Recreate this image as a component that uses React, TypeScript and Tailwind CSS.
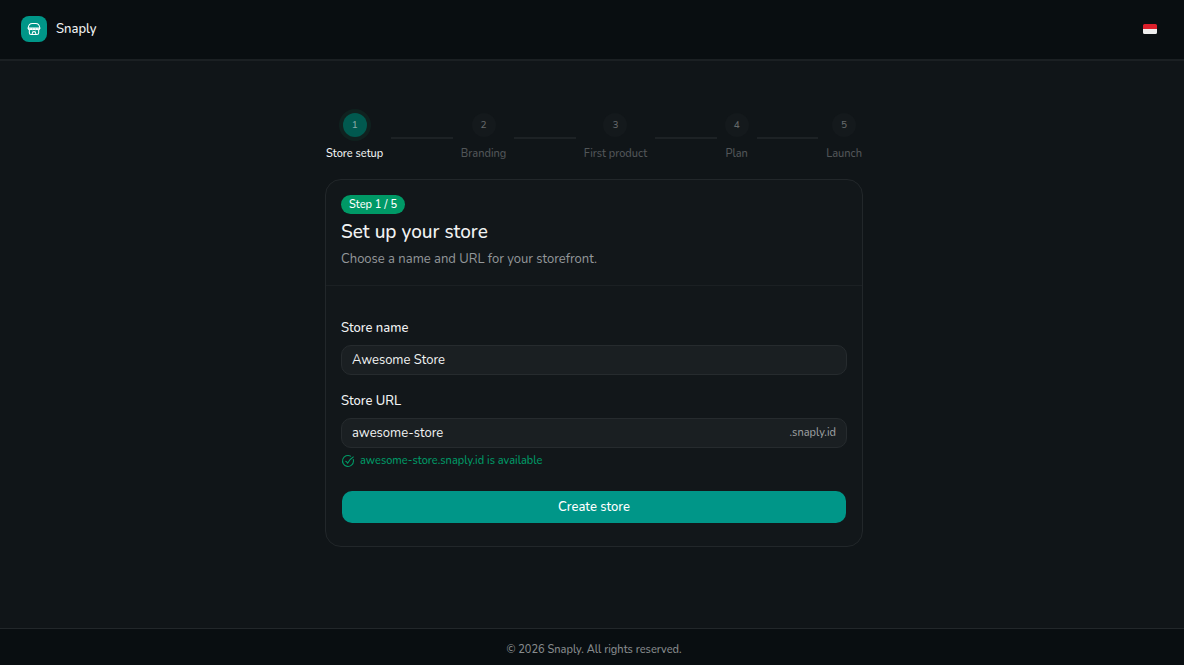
import { Fragment, useState } from "react";

const steps = ["Store setup", "Branding", "First product", "Plan", "Launch"];

function StoreIcon() {
  return (
    <svg viewBox="0 0 24 24" className="size-3.5" fill="none" stroke="currentColor" strokeWidth="1.8" strokeLinecap="round" strokeLinejoin="round" aria-hidden="true">
      <path d="M2 10.500C2.500 6 5.500 2.500 9 2.500h6c3.500 0 6.500 3.500 7 8" />
      <path d="M2 10.500h20c0 1.800-1.100 2.800-2.700 2.800s-2.400-1-2.400-1-.8 1-2.450 1-2.450-1-2.450-1-.8 1-2.450 1-2.450-1-2.450-1-.8 1-2.400 1c-1.600 0-2.700-1-2.700-2.800z" />
      <path d="M4 13.500v5c0 2 .9 3 3 3h10c2.100 0 3-1 3-3v-5" />
      <path d="M9 21.500v-2c0-1.700 1.300-3 3-3s3 1.300 3 3v2" />
    </svg>
  );
}

function CheckIcon() {
  return (
    <svg viewBox="0 0 24 24" className="size-3.5 shrink-0" fill="none" stroke="currentColor" strokeWidth="1.8" strokeLinecap="round" strokeLinejoin="round" aria-hidden="true">
      <path d="M21 9.500c.3.800.4 1.700.4 2.500A9.400 9.400 0 1 1 16.500 3.700" />
      <path d="M8 12.500c0 0 1.500 0 3.300 3.300 0 0 4.500-8 9.700-10.800" />
    </svg>
  );
}

function Flag() {
  return (
    <svg viewBox="0 0 14 10" className="h-2.5 w-3.5" aria-hidden="true">
      <path d="M1.500 0h11a1.500 1.500 0 0 1 1.500 1.500V5H0V1.500A1.500 1.500 0 0 1 1.500 0z" fill="#dc1f2b" />
      <path d="M0 5h14v3.500a1.500 1.500 0 0 1-1.500 1.500h-11A1.500 1.500 0 0 1 0 8.500z" fill="#eeeeee" />
    </svg>
  );
}

function Stepper() {
  return (
    <ol className="flex items-center gap-2 px-px">
      {steps.map((label, i) => (
        <Fragment key={label}>
          {i > 0 && <li aria-hidden="true" className="h-0.5 flex-1 bg-[#1d2225]" />}
          <li className="flex flex-col items-center gap-[9px]">
            <span
              className={
                i === 0
                  ? "flex size-6 items-center justify-center rounded-full bg-[#01594f] text-[10px] leading-4 font-medium text-[#87aaa6] ring-4 ring-[#10211f]"
                  : "flex size-6 items-center justify-center rounded-full bg-[#14191c] text-[10px] leading-4 font-medium text-[#64686a]"
              }
            >
              {i + 1}
            </span>
            <span className={i === 0 ? "text-[11px] leading-4 font-medium whitespace-nowrap text-[#f1f3f3]" : "text-[11px] leading-4 font-medium whitespace-nowrap text-[#525658]"}>
              {label}
            </span>
          </li>
        </Fragment>
      ))}
    </ol>
  );
}

export default function App() {
  const [name, setName] = useState("Awesome Store");
  const [slug, setSlug] = useState("awesome-store");

  return (
    <div className="flex min-h-screen flex-col bg-[#101518] font-[Nunito,'Noto_Sans',sans-serif] text-[13px] leading-5 text-[#f1f3f3]">
      <header className="flex items-center justify-between border-b-2 border-[#1b2023] bg-[#090e11] px-[21px] pt-4 pb-[17px]">
        <a href="#" className="flex items-center gap-[9px] font-medium">
          <span className="flex size-[26px] items-center justify-center rounded-lg bg-[#009688] text-white">
            <StoreIcon />
          </span>
          Snaply
        </a>
        <button type="button" aria-label="Language" className="flex size-[26px] items-center justify-center">
          <Flag />
        </button>
      </header>

      <main className="flex flex-1 flex-col pt-[52px] pb-20 pl-1">
        <div className="mx-auto flex w-full max-w-[538px] flex-col gap-[17px]">
          <Stepper />

          <section className="rounded-2xl border border-[#22272a] bg-[#12171a]">
            <div className="flex flex-col items-start border-b border-[#1b2023] px-[15px] pt-[15px] pb-4">
              <span className="rounded-full bg-[#009966] px-2 text-[11px] leading-[19px] font-medium text-white">Step 1 / 5</span>
              <h1 className="mt-1 text-[19px] leading-7 font-medium">Set up your store</h1>
              <p className="mt-1 leading-[19px] text-[#94989a]">Choose a name and URL for your storefront.</p>
            </div>

            <form className="flex flex-col px-[15px] pt-8 pb-[23px]" onSubmit={(e) => e.preventDefault()}>
              <label htmlFor="store-name" className="font-medium">Store name</label>
              <input
                id="store-name"
                value={name}
                onChange={(e) => setName(e.target.value)}
                className="mt-[7px] h-[30px] rounded-[10px] border border-[#262b2e] bg-[#1a1f22] px-2.5 outline-none"
              />

              <label htmlFor="store-url" className="mt-4 font-medium">Store URL</label>
              <div className="mt-[7px] flex h-[30px] items-center rounded-[10px] border border-[#262b2e] bg-[#1a1f22] px-2.5">
                <input
                  id="store-url"
                  value={slug}
                  onChange={(e) => setSlug(e.target.value)}
                  className="min-w-0 flex-1 bg-transparent outline-none"
                />
                <span className="text-[11px] leading-4 font-medium text-[#989c9e]">.snaply.id</span>
              </div>
              <p className="mt-[5px] flex items-center gap-[5px] text-[11px] leading-4 font-medium text-[#009966]">
                <CheckIcon />
                awesome-store.snaply.id is available
              </p>

              <button type="submit" className="mx-px mt-[22px] h-8 rounded-[10px] bg-[#009688] font-medium text-white">
                Create store
              </button>
            </form>
          </section>
        </div>
      </main>

      <footer className="border-t border-[#22272a] bg-[#090e11] pt-[13px] pb-[7px] pl-1 text-center text-[11px] leading-4 font-medium text-[#878b8d]">
        © 2026 Snaply. All rights reserved.
      </footer>
    </div>
  );
}
